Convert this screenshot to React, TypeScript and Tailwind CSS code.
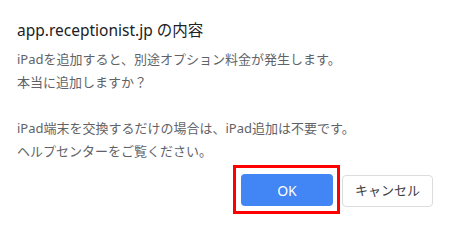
export default function App() {
  return (
    <div
      className="w-[450px] h-[223px] bg-white px-[17px] pt-[19px] text-[#5f6368]"
      style={{ fontFamily: '"Noto Sans", "Noto Sans CJK JP", sans-serif' }}
    >
      <h1 className="text-[15.5px] leading-[22px] text-[#202124]">
        app.receptionist.jp の内容
      </h1>
      <div className="mt-[7px] text-[13px] leading-[23px]">
        <p>iPadを追加すると、別途オプション料金が発生します。</p>
        <p>本当に追加しますか？</p>
        <p>&nbsp;</p>
        <p>iPad端末を交換するだけの場合は、iPad追加は不要です。</p>
        <p>ヘルプセンターをご覧ください。</p>
      </div>
      <div className="mt-[2px] flex items-center justify-end gap-[2px]">
        <div className="border-[3px] border-[#ff0000] pl-[5px] pr-[4px] pt-[6px] pb-[5px]">
          <button className="flex h-[32px] w-[92px] items-center justify-center rounded-[4px] bg-[#4285f4] text-[14px] text-white">
            OK
          </button>
        </div>
        <button className="mt-[3px] flex h-[32px] w-[91px] items-center justify-center rounded-[4px] border border-[#dadce0] bg-white text-[13px] text-[#3c4043]">
          キャンセル
        </button>
      </div>
    </div>
  );
}
